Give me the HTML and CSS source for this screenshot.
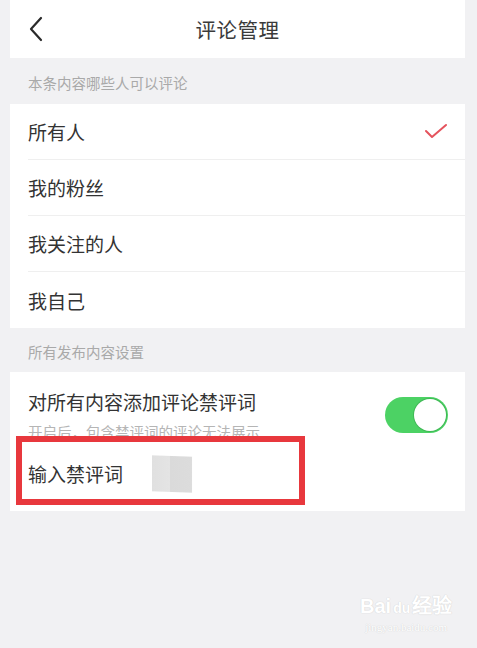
FILE: index.html
```html
<!DOCTYPE html>
<html lang="zh-CN">
<head>
<meta charset="utf-8">
<title>评论管理</title>
<link rel="stylesheet" href="styles.css">
</head>
<body>
<div class="screen">
  <header class="topbar">
    <svg class="back" width="16" height="26" viewBox="0 0 16 26"><polyline points="13,2 3,13 13,24" fill="none" stroke="#2a2a2a" stroke-width="2.2" stroke-linecap="round" stroke-linejoin="round"/></svg>
    <h1 class="title">评论管理</h1>
  </header>

  <div class="section-label">本条内容哪些人可以评论</div>
  <ul class="list">
    <li class="row">所有人
      <svg class="check" width="22" height="16" viewBox="0 0 22 16"><polyline points="1,8 7,14 21,2" fill="none" stroke="#e5535d" stroke-width="2" stroke-linecap="round" stroke-linejoin="round"/></svg>
    </li>
    <li class="row">我的粉丝</li>
    <li class="row">我关注的人</li>
    <li class="row">我自己</li>
  </ul>

  <div class="section-label short">所有发布内容设置</div>
  <div class="panel">
    <div class="toggle-row">
      <div class="toggle-text">
        <div class="toggle-title">对所有内容添加评论禁评词</div>
        <div class="toggle-sub">开启后，包含禁评词的评论无法展示</div>
      </div>
      <div class="switch"><span class="knob"></span></div>
    </div>
    <div class="input-row">
      <span>输入禁评词</span>
      <span class="smudge"></span>
      <div class="highlight"></div>
    </div>
  </div>

  <div class="watermark">
    <div class="wm-main">Bai<span class="wm-paw">du</span>经验</div>
    <div class="wm-sub">jingyan.baidu.com</div>
  </div>
</div>
</body>
</html>
```

FILE: styles.css
```css
* { box-sizing: border-box; }
html, body {
  margin: 0;
  padding: 0;
  background: #f1f1f3;
  font-family: "Noto Sans CJK SC", "Noto Sans", sans-serif;
  color: #333;
}
.screen {
  position: relative;
  width: 477px;
  height: 648px;
  padding: 0 12px 0 10px;
  overflow: hidden;
}
.topbar {
  height: 58px;
  background: #fff;
  display: flex;
  align-items: center;
  justify-content: center;
  position: relative;
}
.back {
  position: absolute;
  left: 18px;
  top: 16px;
}
.title {
  margin: 0;
  font-size: 20.5px;
  font-weight: 400;
  color: #3a3a3a;
  letter-spacing: 0.5px;
}
.section-label {
  height: 46px;
  padding-left: 18px;
  display: flex;
  align-items: center;
  font-size: 14.5px;
  color: #a9a9a9;
  padding-top: 2px;
}
.section-label.short { height: 44px; }
.list {
  list-style: none;
  margin: 0;
  padding: 0 0 0 18px;
  background: #fff;
}
.row {
  height: 56px;
  display: flex;
  align-items: center;
  justify-content: space-between;
  font-size: 19px;
  color: #333;
  border-bottom: 1px solid #efefef;
  padding-right: 18px;
}
.row:last-child { border-bottom: none; }
.check { margin-top: -1px; }
.panel {
  background: #fff;
}
.toggle-row {
  display: flex;
  justify-content: space-between;
  align-items: flex-start;
  padding: 17px 17px 0 18px;
}
.toggle-title {
  font-size: 19px;
  line-height: 26px;
  color: #333;
}
.toggle-sub {
  margin-top: 7px;
  font-size: 14.5px;
  line-height: 20px;
  color: #b5b5b5;
}
.switch {
  margin-top: 8px;
  width: 63px;
  height: 36px;
  border-radius: 18px;
  background: #4cd264;
  position: relative;
}
.knob {
  position: absolute;
  right: 2px;
  top: 2px;
  width: 32px;
  height: 32px;
  border-radius: 50%;
  background: #fff;
  box-shadow: 0 0 0 1px #3fb955;
}
.input-row {
  position: relative;
  display: flex;
  align-items: center;
  height: 69px;
  padding-left: 18px;
  padding-bottom: 6px;
  font-size: 19px;
  line-height: 26px;
  color: #333;
}
.smudge {
  margin-left: 29px;
  width: 40px;
  height: 36px;
  background: linear-gradient(90deg, #e0e0e0 0%, #e4e4e4 45%, #dadada 46%, #dcdcdc 100%);
  transform: skewY(2deg);
  filter: blur(0.6px);
}
.highlight {
  position: absolute;
  left: 6px;
  top: -6px;
  width: 289px;
  height: 69px;
  border: 6px solid #e8383d;
}
.watermark {
  position: absolute;
  left: 360px;
  top: 594px;
  color: #ffffff;
  text-shadow: 0 0 1px #d6d6d6, 0 0 1px #d6d6d6;
  text-align: center;
}
.wm-main {
  font-family: "Liberation Sans", sans-serif;
  font-size: 20px;
  font-weight: 700;
  line-height: 24px;
}
.wm-paw {
  font-size: 14px;
  margin: 0 2px;
}
.wm-sub {
  font-family: "Liberation Serif", serif;
  font-size: 11px;
  line-height: 14px;
}
```
